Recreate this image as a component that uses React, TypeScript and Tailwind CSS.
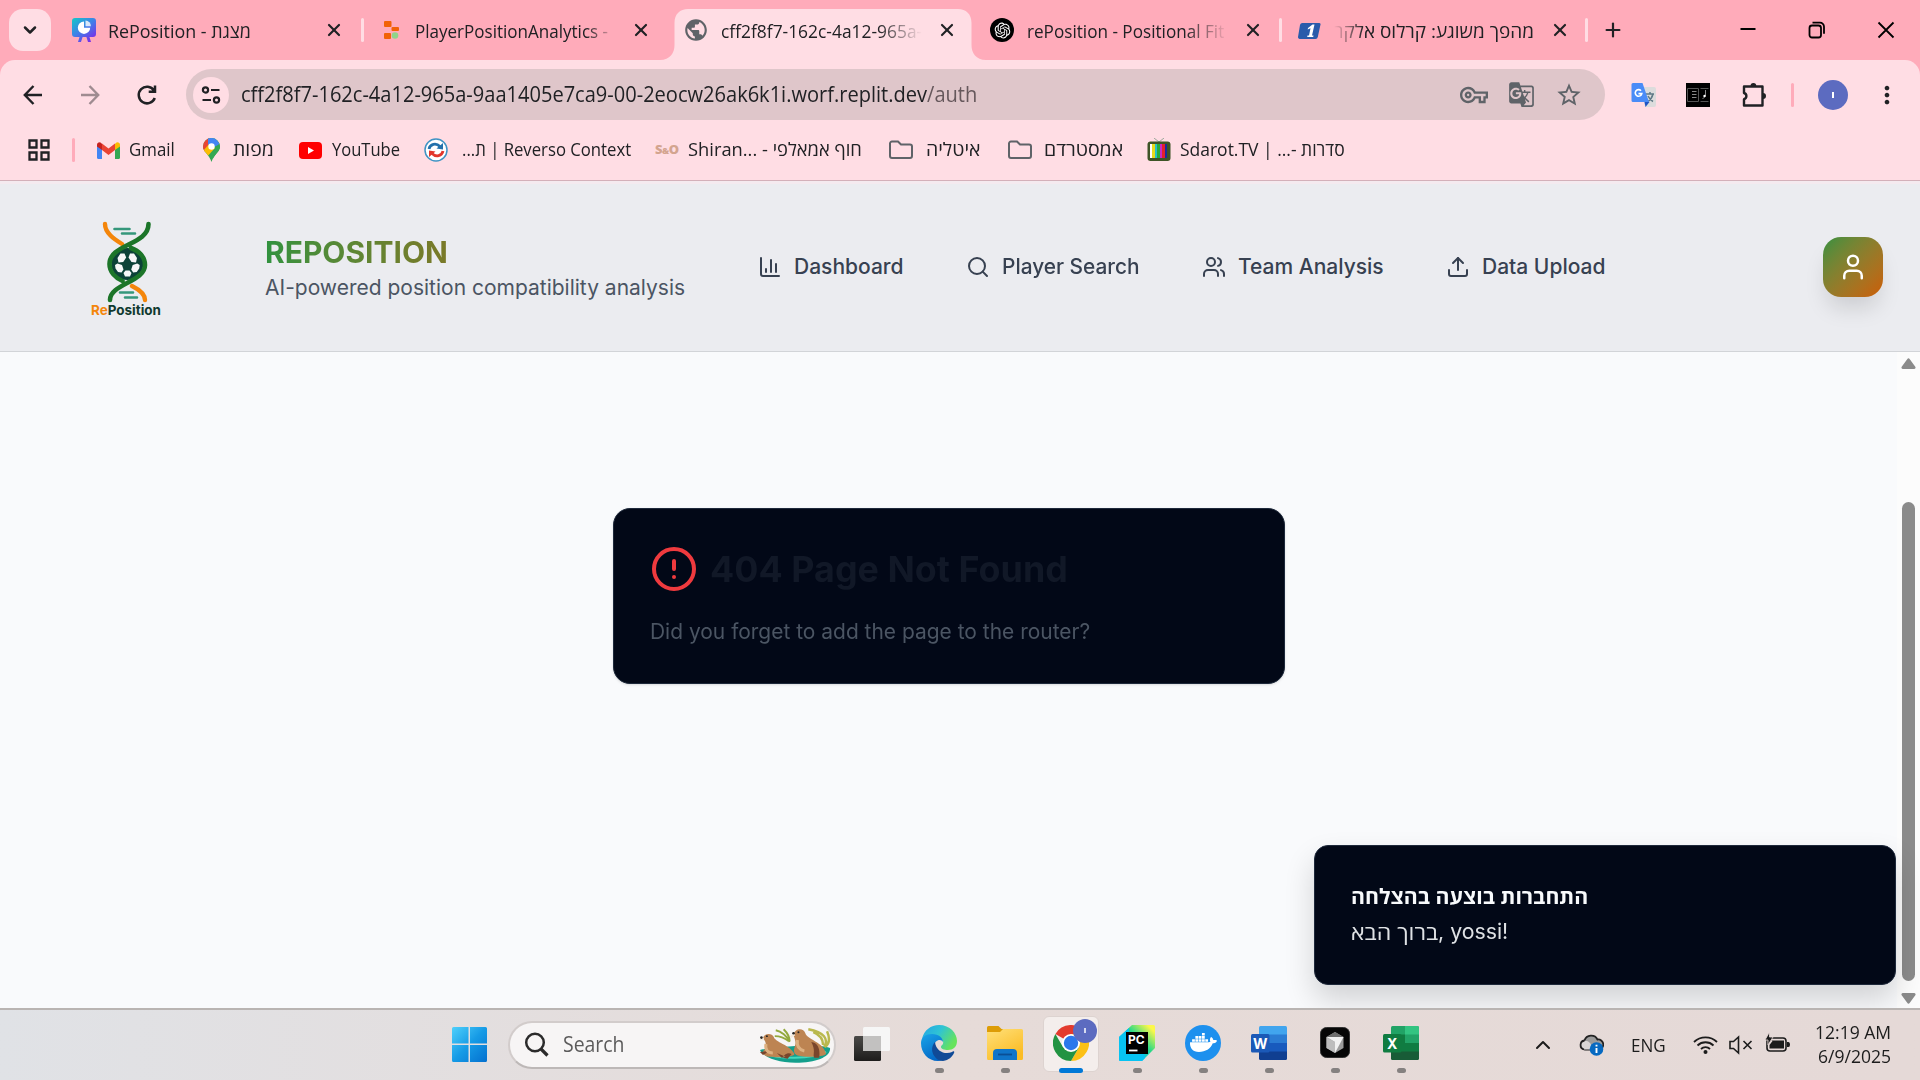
import { useLayoutEffect, useRef, useState } from "react";
import type { ReactNode } from "react";
import { ChartColumn, Search, Users, Upload, User, CircleAlert, X, Plus, ChevronDown, ChevronUp } from "lucide-react";
import { MdPublic, MdGTranslate, MdOutlineVpnKey, MdStarBorder, MdOutlineExtension, MdMoreVert } from "react-icons/md";
import { RiOpenaiFill } from "react-icons/ri";
import { FaDocker } from "react-icons/fa";

/** Text condensed or widened so that it fills its box exactly. */
function Fit({ className = "", dir, children }: { className?: string; dir?: "rtl"; children: ReactNode }) {
  const box = useRef<HTMLSpanElement>(null);
  const text = useRef<HTMLSpanElement>(null);
  const [scale, setScale] = useState(1);
  useLayoutEffect(() => {
    if (box.current && text.current) setScale(box.current.clientWidth / text.current.offsetWidth);
  }, []);
  return (
    <span ref={box} className={"block shrink-0 whitespace-nowrap " + className}>
      <span ref={text} dir={dir} className="inline-block origin-left" style={{ transform: `scaleX(${scale})` }}>
        {children}
      </span>
    </span>
  );
}

/* ---------- Browser tabs ---------- */

function Tab({ icon, iconClass = "w-6", title, active, separator }: { icon: ReactNode; iconClass?: string; title: ReactNode; active?: boolean; separator?: boolean }) {
  return (
    <div className="relative flex h-[60px] w-[306px] shrink-0 items-center">
      {active && (
        <svg className="absolute left-[-10px] top-[9px]" width="326" height="51" viewBox="0 0 326 51" fill="#ffdde4">
          <path d="M0 51C10 51 14.500 44 14.500 36V14C14.500 5 20 0 28 0H298C306 0 311.500 5 311.500 14V36C311.500 44 316 51 326 51Z" />
        </svg>
      )}
      <div className="relative ml-[14px] flex h-6 w-6 items-center justify-center">{icon}</div>
      <div className={"relative w-[201px] overflow-hidden pt-[2px] text-[18px] leading-[26px] " + iconClass}>{title}</div>
      <X className="relative ml-[15px] shrink-0" size={20} strokeWidth={2.6} />
      {separator && <div className="ml-auto h-6 w-[3px] rounded bg-[#ffdde4]" />}
    </div>
  );
}

const CanvaIcon = () => (
  <svg width="24" height="24" viewBox="0 0 24 24">
    <defs>
      <linearGradient id="deck" x1="0" y1="0" x2=".8" y2="1">
        <stop offset="0" stopColor="#13c9c7" />
        <stop offset=".5" stopColor="#3f80e8" />
        <stop offset="1" stopColor="#7d2ae8" />
      </linearGradient>
    </defs>
    <path d="M3 0h18a3 3 0 0 1 3 3v13a3 3 0 0 1-3 3h-3.500l1.500 5h-3l-1.600-5h-3.800L9 24H6l1.500-5H3a3 3 0 0 1-3-3V3a3 3 0 0 1 3-3Z" fill="url(#deck)" />
    <path d="M12 3.500a6.200 6.200 0 1 0 6.200 6.200H12Z" fill="#fff" />
    <path d="M13.500 2.500v5.700h5.400a5.600 5.600 0 0 0-5.400-5.700Z" fill="#fff" opacity=".8" />
  </svg>
);

const BlocksIcon = () => (
  <svg className="ml-[3px] shrink-0" width="24" height="24" viewBox="0 0 24 24">
    <rect x="4" y="3" width="7.500" height="6" rx="1" fill="#f26207" />
    <rect x="11.500" y="9" width="7.500" height="4" rx="1" fill="#f26207" />
    <rect x="4" y="15" width="7" height="6" rx="1" fill="#f26207" />
    <circle cx="15" cy="17.500" r="3.300" fill="#8fd48a" />
  </svg>
);

const OneIcon = () => (
  <svg className="ml-[2px] shrink-0" width="24" height="24" viewBox="0 0 24 24">
    <path d="M5 5h17a1.500 1.500 0 0 1 1.400 2l-2.600 12a2.500 2.500 0 0 1-2.300 2H2.500A1.800 1.800 0 0 1 1 19L3 7a2.400 2.400 0 0 1 2-2Z" fill="#2a5bab" />
    <path d="m11 10 4.500-3.500h2L15 17.500h1.500l-.3 1.500h-6l.3-1.500H12l1.500-7.300-2.800 1.300Z" fill="#fff" />
  </svg>
);

function TabStrip() {
  return (
    <div className="flex h-[60px] items-center bg-[#ffabba]">
      <div className="ml-[9px] flex h-[42px] w-[42px] items-center justify-center rounded-[14px] bg-[#ffdde4]">
        <ChevronDown size={20} strokeWidth={3} />
      </div>
      <div className="ml-[7px] flex">
        <Tab icon={<CanvaIcon />} iconClass="ml-[12px]" title={<Fit className="w-[143px]">RePosition - מצגת</Fit>} separator />
        <Tab icon={<BlocksIcon />} iconClass="ml-[13px] [mask-image:linear-gradient(to_right,black_85%,transparent)]" title={<Fit className="w-[193px]">PlayerPositionAnalytics -</Fit>} />
        <Tab icon={<MdPublic size={26} color="#5f6368" className="shrink-0" />} iconClass="ml-[13px] [mask-image:linear-gradient(to_right,black_78%,transparent)]" title={<Fit className="w-[201px]">cff2f8f7-162c-4a12-965a-</Fit>} active />
        <Tab
          icon={
            <div className="flex h-6 w-6 shrink-0 items-center justify-center rounded-full bg-black">
              <RiOpenaiFill size={19} color="#fff" />
            </div>
          }
          iconClass="ml-[13px] [mask-image:linear-gradient(to_right,black_78%,transparent)]"
          title={<Fit className="w-[197px]">rePosition - Positional Fit</Fit>}
          separator
        />
        <Tab icon={<OneIcon />} iconClass="ml-[14px] [mask-image:linear-gradient(to_left,black_85%,transparent)]" title={<Fit className="w-[200px]" dir="rtl">מהפך משוגע: קרלוס אלקר</Fit>} separator />
      </div>
      <Plus className="ml-[14px]" size={22} strokeWidth={2.4} />
      <div className="ml-auto flex items-center gap-[51px] pr-[25px]">
        <svg width="18" height="18" stroke="#000" strokeWidth="2"><path d="M1.500 8h15" /></svg>
        <svg width="18" height="18" viewBox="0 0 18 18" fill="none" stroke="#000" strokeWidth="1.800">
          <rect x="1.500" y="4.500" width="11.500" height="12" rx="2.500" />
          <path d="M4.500 1.700h7.500a4 4 0 0 1 4 4v7" />
        </svg>
        <svg width="18" height="18" stroke="#000" strokeWidth="1.800"><path d="m1.500 1.500 15 15m0-15-15 15" /></svg>
      </div>
    </div>
  );
}

/* ---------- Address bar ---------- */

function Toolbar() {
  return (
    <div className="flex h-[69px] items-center bg-[#ffdde4]">
      <svg className="ml-[22px]" width="22" height="22" viewBox="0 0 22 22" fill="none" stroke="#202124" strokeWidth="2.400"><path d="M20 11H3M11.500 2 2.800 11l8.700 9" /></svg>
      <svg className="ml-[35px]" width="22" height="22" viewBox="0 0 22 22" fill="none" stroke="#9f8b90" strokeWidth="2.400"><path d="M2 11h17M10.500 2l8.700 9-8.700 9" /></svg>
      <svg className="ml-[35px]" width="22" height="22" viewBox="0 0 22 22" fill="none" stroke="#202124" strokeWidth="2.500"><path d="M18.800 14a8.300 8.300 0 1 1-.8-7.500M19 1.500v6.300h-6.300" /></svg>
      <div className="ml-[28px] flex h-[51px] w-[1419px] items-center rounded-full bg-[#dfc6ca]">
        <div className="ml-[7px] flex h-9 w-9 items-center justify-center rounded-full bg-[#ffdde4]">
          <svg width="20" height="20" viewBox="0 0 20 20" fill="none" stroke="#202124" strokeWidth="2.200">
            <circle cx="4.500" cy="5" r="2.600" />
            <path d="M10 5h8.500M1.500 15H10" />
            <circle cx="15.500" cy="15" r="2.600" />
          </svg>
        </div>
        <Fit className="ml-[12px] w-[736px] pb-[2px] text-[21px] leading-[30px]">
          cff2f8f7-162c-4a12-965a-9aa1405e7ca9-00-2eocw26ak6k1i.worf.replit.dev<span className="text-[#66585c]">/auth</span>
        </Fit>
        <div className="ml-auto flex items-center gap-[20px] pr-[22px] text-[#5f6368]">
          <MdOutlineVpnKey size={28} />
          <MdGTranslate size={27} />
          <MdStarBorder size={28} />
        </div>
      </div>
      <svg className="ml-[26px]" width="26" height="26" viewBox="0 0 26 26">
        <path d="M11 5h12a2 2 0 0 1 2 2v16a2 2 0 0 1-2 2h-9Z" fill="#dcdcdc" />
        <path d="M15 12h8m-4-2v2m3 0c-.8 3.500-3 6-5 7.500m0-5.500c1 2 3 4.300 5 5.500" stroke="#5f7a86" strokeWidth="1.500" fill="none" />
        <path d="m13.500 20 5 0-4 5Z" fill="#1f55c4" />
        <path d="M2 1h9.500l6.500 19H2a1.500 1.500 0 0 1-1.500-1.500v-16A1.500 1.500 0 0 1 2 1Z" fill="#4a8cf7" />
        <path d="M10 8.700a3.300 3.300 0 1 0 .8 2.900H7.500" stroke="#fff" strokeWidth="1.600" fill="none" />
      </svg>
      <svg className="ml-[29px]" width="24" height="24" viewBox="0 0 24 24">
        <path fill="#000" d="M0 0h24v24H0z" />
        <path d="M1.500 5.500h11v13h-11zM14.500 5.500h8M14.500 18.500h8" stroke="#555" fill="none" />
        <path d="M6 8.500h4.500M6 11.500h4.500M6 14.500h4.500M19.500 7v6l-3 3" stroke="#888" fill="none" />
        <circle cx="18.500" cy="13" r="1.200" fill="#fff" />
      </svg>
      <svg className="ml-[31px]" width="26" height="26" viewBox="0 0 26 26" fill="none" stroke="#202124" strokeWidth="2.400" strokeLinejoin="round">
        <path d="M3 4.500h18.500v19H3v-6.300a3.200 3.200 0 0 0 0-6.200Z" />
        <path d="M9.500 4a2.900 2.900 0 0 1 5.800 0ZM22 11a3 3 0 0 1 0 6Z" fill="#202124" stroke="none" />
      </svg>
      <div className="ml-[24px] h-6 w-[3px] rounded bg-[#ffabba]" />
      <div className="ml-[24px] flex h-[30px] w-[30px] items-center justify-center rounded-full bg-[#5c6bc0] text-[11px] font-semibold text-white">
        <div className="h-[6px] w-[2px] bg-white" />
      </div>
      <MdMoreVert className="ml-[25px]" size={28} />
    </div>
  );
}

/* ---------- Bookmarks ---------- */

const FolderIcon = () => (
  <svg width="24" height="20" viewBox="0 0 24 20" fill="none" stroke="#5f6368" strokeWidth="2"><path d="M3 1.500h6l3 3h9a2 2 0 0 1 2 2V16a2 2 0 0 1-2 2H3a2 2 0 0 1-2-2V3.500a2 2 0 0 1 2-2Z" /></svg>
);

const bookmarks: { icon: ReactNode; box: string; label: string; width: string }[] = [
  {
    icon: (
      <svg width="23" height="17" viewBox="0 0 23 17">
        <path d="M0 3v12.500A1.500 1.500 0 0 0 1.500 17H5V7Z" fill="#4285f4" />
        <path d="M23 3v12.500a1.500 1.500 0 0 1-1.500 1.500H18V7Z" fill="#34a853" />
        <path d="M18 2v6l5-3.500V2.800c0-2.200-2.400-3.400-4-2Z" fill="#fbbc04" />
        <path d="M5 2v6L0 4.500V2.800C0 .6 2.400-.6 4 .8Z" fill="#c5221f" />
        <path d="M5 8V1.600l6.500 4.900L18 1.600V8l-6.500 5Z" fill="#ea4335" />
      </svg>
    ),
    box: "ml-[22px] w-[32px]",
    label: "Gmail",
    width: "w-[46px]",
  },
  {
    icon: (
      <svg width="17" height="24" viewBox="0 0 17 24">
        <defs><clipPath id="pin"><path d="M8.500 0A8.500 8.500 0 0 0 0 8.500C0 14 6 16 8.500 24 11 16 17 14 17 8.500A8.500 8.500 0 0 0 8.500 0Z" /></clipPath></defs>
        <g clipPath="url(#pin)">
          <path d="M0 0h17v24H0z" fill="#34a853" />
          <path d="M0 0h6l1 8-7 8Z" fill="#ea4335" />
          <path d="M0 13 7 5l5 5-9 10Z" fill="#fbbc04" />
          <path d="M5 0h7l5 6-8 4-4-4Z" fill="#4285f4" />
          <path d="m17 5-7 8 0 11 7-5Z" fill="#34a853" />
        </g>
        <circle cx="8.500" cy="8.500" r="3.200" fill="#fff" />
      </svg>
    ),
    box: "ml-[28px] w-[30px]",
    label: "מפות",
    width: "w-[41px]",
  },
  {
    icon: <svg width="23" height="17" viewBox="0 0 23 17"><rect width="23" height="17" rx="4" fill="#f00" /><path d="m9 5 6 3.500L9 12Z" fill="#fff" /></svg>,
    box: "ml-[25px] w-[33px]",
    label: "YouTube",
    width: "w-[68px]",
  },
  {
    icon: (
      <svg width="24" height="24" viewBox="0 0 24 24" fill="none">
        <circle cx="12" cy="12" r="11" fill="#fff" stroke="#3f93c4" strokeWidth="1.500" />
        <path d="M5 11c1-5 7-6.500 11-2.500" stroke="#2270ab" strokeWidth="2.800" />
        <path d="m12.500 10.500 6.500 1V5Z" fill="#2270ab" />
        <path d="M19 13c-1 5-7 6.500-11 2.500" stroke="#e2372c" strokeWidth="2.800" />
        <path d="m11.500 13.500-6.500-1V19Z" fill="#e2372c" />
      </svg>
    ),
    box: "ml-[24px] w-[38px]",
    label: "...ת | Reverso Context",
    width: "w-[169px]",
  },
  {
    icon: <span className="text-[13px] font-extrabold tracking-[-0.5px] text-[#d3a48f]">S<span className="text-[9px]">&amp;</span>O</span>,
    box: "ml-[24px] w-[33px]",
    label: "Shiran... - חוף אמאלפי",
    width: "w-[174px]",
  },
  { icon: <FolderIcon />, box: "ml-[27px] w-[37px]", label: "איטליה", width: "w-[55px]" },
  { icon: <FolderIcon />, box: "ml-[27px] w-[36px]", label: "אמסטרדם", width: "w-[79px]" },
  {
    icon: (
      <svg width="24" height="24" viewBox="0 0 24 24">
        <path d="m7 0 5 4 5-4" stroke="#9aa79a" fill="none" />
        <rect x=".5" y="3.500" width="23" height="19.500" rx="3" fill="#3e5426" />
        <path fill="#fff" d="M3 6h2v14H3z" /><path fill="#e8dc1c" d="M5 6h3v14H5z" /><path fill="#27bfc9" d="M8 6h2v14H8z" /><path fill="#26ad3a" d="M10 6h3v14h-3z" /><path fill="#c92ac4" d="M13 6h2v14h-2z" /><path fill="#e3212b" d="M15 6h3v14h-3z" /><path fill="#1b2a9c" d="M18 6h2v14h-2z" />
      </svg>
    ),
    box: "ml-[24px] w-[33px]",
    label: "Sdarot.TV | ...- סדרות",
    width: "w-[165px]",
  },
];

function BookmarksBar() {
  return (
    <div className="flex h-[52px] items-center border-b border-[#d3b0b9] bg-[#ffdde4] pb-[9px]">
      <svg className="ml-[28px]" width="22" height="22" fill="none" stroke="#202124" strokeWidth="2.300">
        <path d="M1.500 1.500h7v7h-7zM13.500 1.500h7v7h-7zM1.500 13.500h7v7h-7zM13.500 13.500h7v7h-7z" />
      </svg>
      <div className="ml-[22px] h-6 w-[3px] rounded bg-[#ffabba]" />
      {bookmarks.map((b) => (
        <div key={b.label} className="flex items-center">
          <div className={"flex shrink-0 items-center " + b.box}>{b.icon}</div>
          <Fit className={"pb-[2px] text-[18px] leading-[26px] " + b.width}>{b.label}</Fit>
        </div>
      ))}
    </div>
  );
}

/* ---------- Web page ---------- */

const Logo = () => (
  <svg width="76" height="102" viewBox="0 0 76 102" fill="none" strokeLinecap="round">
    <path d="M17 7c0 9 9 15 17 20M44 69c8 4 13 9 13 14" stroke="#f4860b" strokeWidth="4.400" />
    <circle cx="39.300" cy="47" r="16" fill="#0c4238" />
    <path d="M26.500 12h15M34 16.500h13M32 75.500h13M37 80.500h12" stroke="#35977b" strokeWidth="2.600" />
    <path d="M60.500 7c0 21-39 20-39 40 0 8 6 14 13 17M43 31c8 3 14 9 14 17 0 17-35 19-35 35" stroke="#1c7529" strokeWidth="4.600" />
    <g fill="#f6f7f8">
      <path d="m29.500 41 3-4.500h4l1.700 4-3 4.500-4.700.5ZM49 41l-3-4.500h-4l-1.500 4 3 4.500 4.500.5ZM27 48l2.500-1.500 4.500 1.500 1.500 4.500-2 3-3.500-.5-2.500-3.500ZM51.700 48l-2.500-1.500L44.700 48l-1.500 4.500 2 3 3.500-.5 2.500-3.500ZM35.500 56l2-2.500h4l2 2.500-1.500 3.500h-5Z" />
    </g>
    <text x="3" y="97.500" textLength="70" lengthAdjust="spacingAndGlyphs" fontFamily="Inter, sans-serif" fontWeight="700" fontSize="13.500">
      <tspan fill="#f4860b">Re</tspan><tspan fill="#10392f">Position</tspan>
    </text>
  </svg>
);

const nav = [
  { icon: ChartColumn, label: "Dashboard", width: "w-[110px]" },
  { icon: Search, label: "Player Search", width: "w-[138px]" },
  { icon: Users, label: "Team Analysis", width: "w-[146px]" },
  { icon: Upload, label: "Data Upload", width: "w-[123px]" },
];

function AppHeader() {
  return (
    <header className="flex h-[171px] shrink-0 items-center border-b border-t-3 border-b-[#d2d4d8] border-t-[#f4eaef] bg-[#ebecf0] pb-[2px]">
      <div className="ml-[88px] w-[76px] pt-[3px]"><Logo /></div>
      <div className="ml-[101px] w-[421px] pt-[6px]">
        <Fit className="w-[183px] text-[30px] leading-[36px] font-bold">
          <span className="bg-gradient-to-r from-[#2f923f] to-[#7a7928] bg-clip-text text-transparent">REPOSITION</span>
        </Fit>
        <Fit className="w-[420px] text-[21px] leading-[36px] text-[#4b5563]">AI-powered position compatibility analysis</Fit>
      </div>
      <nav className="ml-[72px] flex gap-[62px] text-[#374151]">
        {nav.map(({ icon: Icon, label, width }) => (
          <div key={label} className="flex items-center gap-3">
            <Icon size={24} strokeWidth={2} />
            <Fit className={"text-[21px] leading-[30px] font-medium " + width}>{label}</Fit>
          </div>
        ))}
      </nav>
      <div className="mr-[37px] ml-auto flex h-[60px] w-[60px] items-center justify-center rounded-[18px] bg-gradient-to-br from-[#2a9040] to-[#cb5c00] shadow-[0_15px_22px_-4px_rgba(0,0,0,0.13)]">
        <User size={30} color="#fff" strokeWidth={2} />
      </div>
    </header>
  );
}

function PageBody() {
  return (
    <div className="relative flex min-h-0 flex-1 overflow-hidden bg-[#f9fafc]">
      <main className="flex flex-1 justify-center pt-[156px] pl-[1px]">
        <section className="h-[176px] w-[672px] rounded-[17px] border border-[#1e293b] bg-[#020817] pt-[36px] pl-[36px] shadow-sm">
          <div className="flex h-[48px] items-center gap-[12px]">
            <CircleAlert size={48} color="#ef3a3e" strokeWidth={2} />
            <Fit className="w-[358px] text-[36px] leading-[48px] font-bold text-[#111827]">404 Page Not Found</Fit>
          </div>
          <Fit className="mt-[24px] w-[440px] text-[21px] leading-[30px] text-[#4b5563]">Did you forget to add the page to the router?</Fit>
        </section>
      </main>
      <aside className="flex w-[23px] flex-col items-center bg-[#fcfcfc]">
        <svg className="mt-[6px]" width="15" height="12" fill="#8b8b8b"><path d="M6.200 1.200a1.600 1.600 0 0 1 2.600 0l5.500 7.600a1.400 1.400 0 0 1-1.200 2.200H1.900A1.400 1.400 0 0 1 .7 8.800Z" /></svg>
        <div className="mt-[132px] h-[479px] w-[13px] rounded-full bg-[#8b8b8b]" />
        <svg className="mt-[11px]" width="15" height="12" fill="#8b8b8b"><path d="M6.200 10.800a1.600 1.600 0 0 0 2.600 0l5.500-7.600A1.400 1.400 0 0 0 13.100 1H1.900A1.400 1.400 0 0 0 .7 3.200Z" /></svg>
      </aside>
      <div className="absolute top-[493px] left-[1314px] h-[140px] w-[582px] rounded-[14px] border border-[#1e293b] bg-[#020817] pt-[35px] pl-[36px] text-[#f8fafc] shadow-[0_15px_30px_0_rgba(0,0,0,0.16)]">
        <Fit className="w-[237px] font-['Open_Sans'] text-[21px] leading-[30px] font-bold">התחברות בוצעה בהצלחה</Fit>
        <div className="mt-[6px] flex text-[21px] leading-[30px] opacity-90">
          <Fit className="w-[87px] font-['Open_Sans']">ברוך הבא</Fit>
          <Fit className="w-[70px]">, yossi!</Fit>
        </div>
      </div>
    </div>
  );
}

/* ---------- Taskbar ---------- */

const WindowsIcon = () => (
  <svg width="35" height="35" viewBox="0 0 35 35">
    <defs>
      <linearGradient id="win" gradientUnits="userSpaceOnUse" x1="0" y1="0" x2="35" y2="35"><stop offset="0" stopColor="#4fd0fb" /><stop offset=".5" stopColor="#169be6" /><stop offset="1" stopColor="#0470cf" /></linearGradient>
    </defs>
    <path fill="url(#win)" d="M1.500 0H16.500V16.500H0V1.500A1.500 1.500 0 0 1 1.500 0ZM18 0H33.500A1.500 1.500 0 0 1 35 1.500V16.500H18ZM0 18H16.500V35H1.500A1.500 1.500 0 0 1 0 33.500ZM18 18H35V33.500A1.500 1.500 0 0 1 33.500 35H18Z" />
  </svg>
);

const Otters = () => (
  <svg width="72" height="38" viewBox="0 0 73 38" fill="none">
    <path d="M1 23c8-3 62-7 71-2 1 9-14 15-35 15C20 36 5 31 1 23Z" fill="#149f8c" />
    <path d="M8 27c10 5 45 6 60-2" stroke="#43d8bd" strokeWidth="2" />
    <path d="M31 15C29 9 22 4 17 3M31 14c0-5-3-9-6-12M30 14c-5-4-9-5-14-5" stroke="#93a93d" strokeWidth="2" />
    <path d="M66 20C71 12 66 5 50 2M65 18c0-7-5-11-10-13M67 20c4-3 5-9 2-16" stroke="#b9b84d" strokeWidth="2.500" />
    <path d="M4 11c1-5 9-6 11-1 1 5 16 8 21 17 0 3-18 4-26 3-5-1-8-4-4-8 1-4 2-6-2-11Z" fill="#bd8452" />
    <path d="M35 8c1-7 10-8 12-2 1 6 19 9 21 21-2 3-24 4-30 1-5-3-1-8-1-12 0-3-1-5-2-8Z" fill="#bd8452" />
    <path d="M53 15c8 1 9 9 8 16h-5c-2-3 2-7-3-16ZM33 27c-4-2-8 1-9 4l5 1ZM1 25l10-1-7 4ZM18 26l9 4-4 1Z" fill="#79452c" />
    <path d="M7 17c-1 6 2 9 7 9M39 13c-1 7 2 10 7 11" stroke="#ddb080" strokeWidth="3" />
    <path d="M1 12h4M32 10l4-3" stroke="#f3e9dc" strokeWidth="2.500" />
    <circle cx="8" cy="9" r="1" fill="#222" /><circle cx="40" cy="5" r="1" fill="#222" /><circle cx="2.500" cy="10.500" r="1.300" fill="#222" /><circle cx="35" cy="6" r="1.300" fill="#222" />
  </svg>
);

const EdgeIcon = () => (
  <svg width="36" height="36" viewBox="0 0 36 36">
    <defs>
      <linearGradient id="e1" x1="0" y1="0" x2="1" y2=".5"><stop offset="0" stopColor="#22a4e6" /><stop offset=".5" stopColor="#2fc3d5" /><stop offset="1" stopColor="#66e35c" /></linearGradient>
      <linearGradient id="e2" x1="0" y1="0" x2=".5" y2="1"><stop offset="0" stopColor="#1aa5e8" /><stop offset="1" stopColor="#0367c6" /></linearGradient>
    </defs>
    <path d="M1 14C3 5 10 0 18 0c11 0 18 8 18 16 0 6-4 9-9 9-4 0-7-1-7-3s3-2 2-6c-1-3-5-5-9-5-5 0-9 2-12 3Z" fill="url(#e1)" />
    <path d="M0 18C0 12 5 9 11 9c7 0 11 4 11 8-2-4-9-2-9 5s5 11 11 12c-2 1-4 2-7 2C7 36 0 28 0 18Z" fill="url(#e2)" />
    <path d="M14 17c-7 8 0 19 8 19 6-1 9-4 11-8 1-2-1-2-2-1-6 3-16 0-17-10Z" fill="#104a97" />
  </svg>
);

const ExplorerIcon = () => (
  <svg width="36" height="35" viewBox="0 0 36 35">
    <defs><linearGradient id="fold" x1="0" y1="0" x2=".6" y2="1"><stop offset="0" stopColor="#ffe07a" /><stop offset="1" stopColor="#fbbc25" /></linearGradient></defs>
    <path d="M1.500 1h10l3 3H34v8H0V2.500Q0 1 1.500 1Z" fill="#dd9c06" />
    <path d="M0 7h13l3-3h18.500q1.500 0 1.500 1.500v28q0 1.500-1.500 1.500h-33Q0 35 0 33.500Z" fill="url(#fold)" />
    <path d="M6 35V28q0-4 4-4h16q4 0 4 4v7Z" fill="#0f75c9" />
    <path d="M11 29.500h14" stroke="#0a4f95" strokeWidth="1.800" />
  </svg>
);

const ChromeIcon = () => (
  <svg width="36" height="36" viewBox="0 0 36 36">
    <path d="M18 18 2.400 9A18 18 0 0 1 33.600 9Z" fill="#e33b2e" />
    <path d="M18 9h15.600A18 18 0 0 1 18 36l7.800-13.500Z" fill="#fcc015" />
    <path d="M25.800 22.500 18 36A18 18 0 0 1 2.400 9l7.800 13.500Z" fill="#229342" />
    <circle cx="18" cy="18" r="9" fill="#fff" />
    <circle cx="18" cy="18" r="7.200" fill="#2b78ec" />
  </svg>
);

const PyCharmIcon = () => (
  <svg width="36" height="36" viewBox="0 0 36 36">
    <defs><linearGradient id="pc" x1=".3" y1=".6" x2=".85" y2=".05"><stop offset="0" stopColor="#07c3f2" /><stop offset=".4" stopColor="#21d789" /><stop offset="1" stopColor="#fcf84a" /></linearGradient></defs>
    <path d="M13 0h21.500Q36 0 36 1.500V23L23 36H1.500Q0 36 0 34.500V12Z" fill="url(#pc)" />
    <path d="M0 12 10 3v23h15l1 7-3 3H1.500Q0 36 0 34.500Z" fill="#07c3f2" />
    <path d="M7 7h22v22H7z" fill="#000" />
    <path d="M10 25.500h8.500" stroke="#fff" strokeWidth="1.800" />
    <text x="9" y="18.500" fontFamily="Inter, sans-serif" fontWeight="700" fontSize="12" fill="#fff">PC</text>
  </svg>
);

function OfficeIcon({ letter, bands, tile }: { letter: string; bands: string[]; tile: string }) {
  return (
    <svg width="36" height="34" viewBox="0 0 36 34">
      <defs><clipPath id={"sheet" + letter}><rect x="8" width="28" height="34" rx="1.500" /></clipPath></defs>
      <g clipPath={`url(#sheet${letter})`}>
        {bands.map((c, i) => <rect key={c} x="8" y={i * 8.5} width="28" height="9" fill={c} />)}
        {letter === "X" && <path d="M22 0h14v8.500H22z" fill="#33c481" />}
        {letter === "X" && <path d="M8 8.500h14V17H8z" fill="#107c41" />}
      </g>
      <rect x="0" y="8" width="18.500" height="18.500" rx="1.500" fill={tile} />
      <text x="9.200" y="22.500" textAnchor="middle" fontFamily="Inter, sans-serif" fontWeight="700" fontSize="14" fill="#fff">{letter}</text>
    </svg>
  );
}

const CursorIcon = () => (
  <svg width="30" height="31" viewBox="0 0 30 31">
    <rect x=".5" y=".5" width="29" height="30" rx="6" fill="#060606" stroke="#333" />
    <path d="m15 5 8.500 5v11L15 26l-8.500-5V10Z" fill="#9b9b9b" />
    <path d="m15 5 8.500 5H6.500Z" fill="#6e6e6e" />
    <path d="M6.500 10h17L15 26V15Z" fill="#f1f1f1" />
    <path d="M6.500 10 15 15v11l-8.500-5Z" fill="#bdbdbd" />
  </svg>
);

const apps: { name: string; icon: ReactNode; active?: boolean }[] = [
  { name: "edge", icon: <EdgeIcon /> },
  { name: "explorer", icon: <ExplorerIcon /> },
  { name: "chrome", icon: <ChromeIcon />, active: true },
  { name: "pycharm", icon: <PyCharmIcon /> },
  { name: "docker", icon: <div className="flex h-9 w-9 items-center justify-center rounded-full bg-[#1d90ee]"><FaDocker size={27} color="#fff" /></div> },
  { name: "word", icon: <OfficeIcon letter="W" bands={["#41a5ee", "#2b7cd3", "#185abd", "#103f91"]} tile="#1b59b7" /> },
  { name: "cursor", icon: <CursorIcon /> },
  { name: "excel", icon: <OfficeIcon letter="X" bands={["#21a366", "#22a367", "#107c42", "#185c37"]} tile="#107c41" /> },
];

function Taskbar() {
  return (
    <footer className="flex h-[72px] shrink-0 items-center border-t-2 border-[#b9b4b2] bg-gradient-to-r from-[#e0e2e6] via-[#e6dbd8] to-[#e5d9d7] pb-[1px] text-[#1c1c1c]">
      <div className="ml-[452px]"><WindowsIcon /></div>
      <div className="ml-[21px] flex h-[48px] w-[328px] items-center rounded-full border-2 border-[#d2cccb] border-b-[#bdb8b7] bg-[#f7f5f5]">
        <svg className="ml-[14px]" width="25" height="25" viewBox="0 0 25 25" fill="none" stroke="#2b2b2b" strokeWidth="2.500"><circle cx="11" cy="10.500" r="8.800" /><path d="m17 17 6.500 6.500" strokeWidth="3.200" /></svg>
        <Fit className="ml-[14px] w-[62px] pb-[1px] text-[21px] leading-[30px] text-[#5c5b5b]">Search</Fit>
        <div className="mr-[3px] ml-auto pt-[2px]"><Otters /></div>
      </div>
      <svg className="ml-[18px]" width="36" height="35" viewBox="0 0 36 35">
        <defs><linearGradient id="dark" x1="0" y1="0" x2="0" y2="1"><stop offset="0" stopColor="#4a4947" /><stop offset="1" stopColor="#1d1c1b" /></linearGradient></defs>
        <rect y="9" width="27" height="25" rx="1.500" fill="url(#dark)" />
        <rect x="9" width="27" height="24" rx="1.500" fill="#f6f6f6" />
        <path d="M9 9h18v15H9z" fill="#c2c1c0" />
      </svg>
      <div className="ml-[16px] flex">
        {apps.map((a) => (
          <div key={a.name} className="relative flex h-[70px] w-[66px] flex-col items-center">
            <div className={a.active ? "mt-[6px] flex h-[56px] w-[56px] items-center justify-center rounded-[6px] border border-[#ddd3d0] bg-[#f4eeec] pb-[2px]" : "mt-[6px] flex h-[56px] items-center pb-[2px]"}>{a.icon}</div>
            <div className={a.active ? "absolute top-[58px] h-[5px] w-[24px] rounded-full bg-[#0078d7]" : "absolute top-[58px] h-[5px] w-[9px] rounded-full bg-[#858180]"} />
            {a.active && (
              <div className="absolute top-[9px] left-[35px] flex h-6 w-6 items-center justify-center rounded-full bg-[#5c6bc0]">
                <div className="h-[5px] w-[2px] bg-[#d6daf0]" />
              </div>
            )}
          </div>
        ))}
      </div>
      <div className="mr-[29px] ml-auto flex items-center">
        <ChevronUp size={24} strokeWidth={2} />
        <svg className="ml-[24px]" width="25" height="24" viewBox="0 0 25 24">
          <path d="M5.500 16.500a4.700 4.700 0 0 1 0-9 7 7 0 0 1 13-1A5 5 0 0 1 20 16.500Z" fill="#9b9b9b" stroke="#222" strokeWidth="1.800" />
          <path d="M5 8c4-1 7 2 10 8.500H5C0 16 0 9 5 8Z" fill="#d9d6d5" />
          <path d="M5 16.500a4.600 4.600 0 0 1 .5-9" fill="none" stroke="#222" strokeWidth="1.800" />
          <circle cx="17.500" cy="16" r="6.800" fill="#0669c1" />
          <path d="M17.500 11.800v1.800m0 1.500v5" stroke="#fff" strokeWidth="1.900" />
        </svg>
        <Fit className="ml-[27px] w-[35px] text-[18px] leading-[24px]">ENG</Fit>
        <svg className="ml-[27px]" width="25" height="20" viewBox="0 0 25 20" fill="none" stroke="#1c1c1c" strokeWidth="1.800">
          <path d="M1 7a16.500 16.500 0 0 1 23 0M4.500 10.500a11.500 11.500 0 0 1 16 0M8 14a6.500 6.500 0 0 1 9 0" />
          <circle cx="12.500" cy="17" r="2" fill="#1c1c1c" stroke="none" />
        </svg>
        <svg className="ml-[11px]" width="25" height="20" viewBox="0 0 25 20" fill="none" stroke="#1c1c1c" strokeWidth="1.600">
          <path d="M1 6.500h3.500l5-4.500v16l-5-4.500H1ZM14.500 6l8 8m0-8-8 8" />
        </svg>
        <svg className="mb-[3px] ml-[11px]" width="26" height="22" viewBox="0 0 26 22">
          <rect x="2" y="6" width="19" height="13" rx="3" fill="none" stroke="#1c1c1c" strokeWidth="1.600" />
          <path d="M6 8.500h13v8H4.500V13l3-4ZM22 10h1.500q1.500 0 1.500 2.500T23.500 15H22Z" fill="#1c1c1c" />
          <path d="M4.500 0v5H8L3 13V8H0Z" fill="#1c1c1c" stroke="#e8dbd8" strokeWidth=".8" />
        </svg>
        <div className="ml-[24px] flex flex-col items-end pb-[2px] text-[18px] leading-[24px]">
          <Fit className="w-[76px]">12:19 AM</Fit>
          <Fit className="w-[73px]">6/9/2025</Fit>
        </div>
      </div>
    </footer>
  );
}

export default function App() {
  return (
    <div className="flex h-[1080px] w-[1920px] flex-col overflow-hidden bg-[#ffabba] font-['Open_Sans','Noto_Sans','DejaVu_Sans',sans-serif] text-[#202124]">
      <TabStrip />
      <div className="overflow-hidden rounded-t-[15px]">
        <Toolbar />
        <BookmarksBar />
      </div>
      <div className="flex min-h-0 flex-1 flex-col font-['Inter','Open_Sans',sans-serif]">
        <AppHeader />
        <PageBody />
      </div>
      <Taskbar />
    </div>
  );
}
